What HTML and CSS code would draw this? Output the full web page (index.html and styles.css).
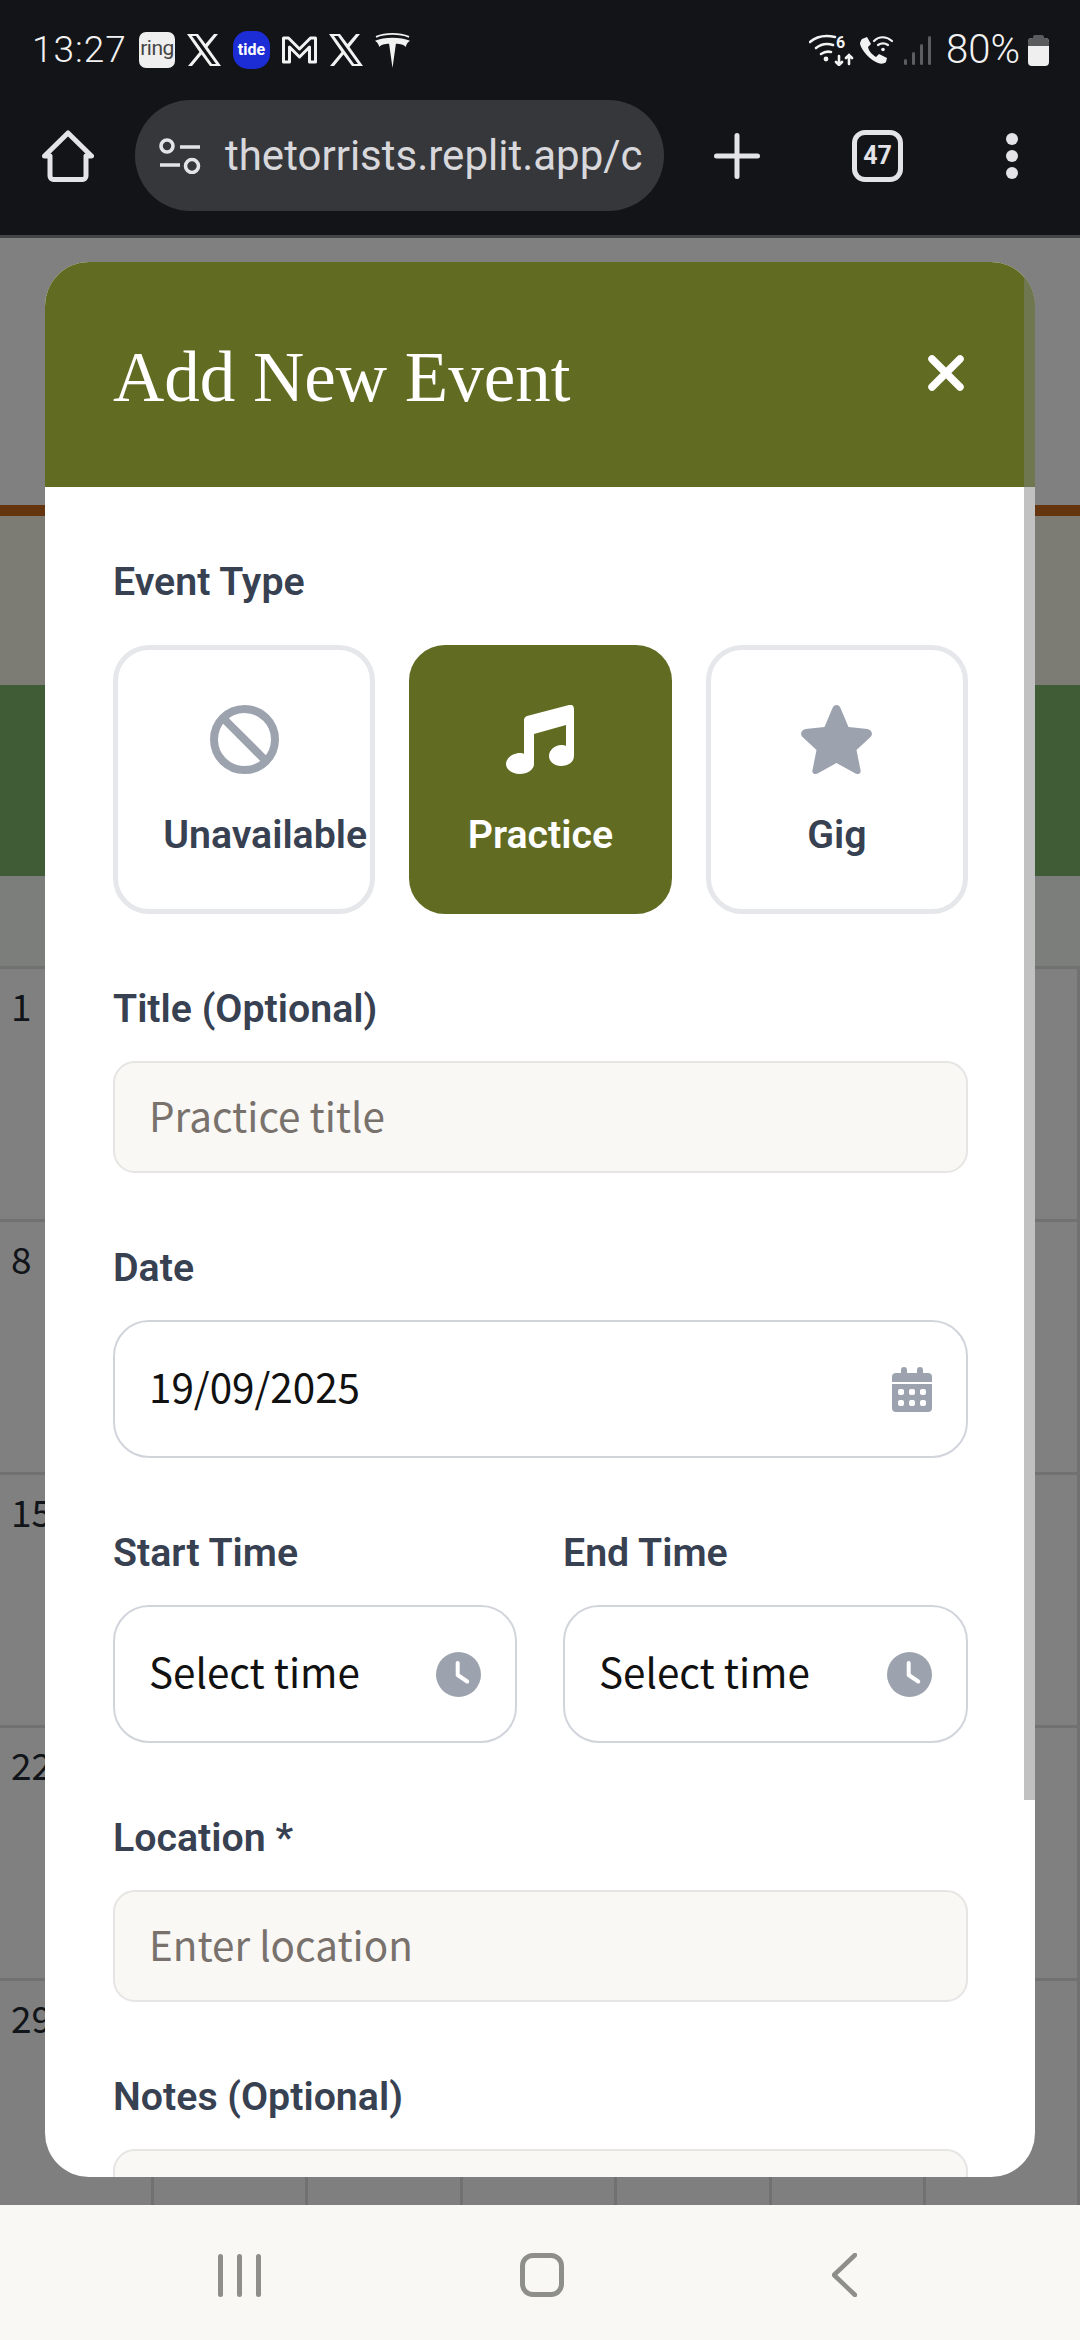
FILE: index.html
```html
<!DOCTYPE html>
<html lang="en">
<head>
  <meta charset="utf-8">
  <title>Add New Event</title>
  <link rel="stylesheet" href="styles.css">
</head>
<body>
  <div class="phone">
    <header class="chrome">
      <div class="status">
        <span class="clock">13:27</span>
        <span class="ring">ring</span>
        <svg width="34" height="32" viewBox="0 0 34 32"><path d="M0 0h11l7.500 10L27 0h4L20.500 13 34 32H23l-8.500-11.500L5 32H1l11.500-14zM5 2l20 28h4L9 2z" fill="#f2f2f2" fill-rule="evenodd"/></svg>
        <span class="tide">tide</span>
        <svg width="35" height="28" viewBox="0 0 35 28"><path d="M1.500 2h5l11 11 11-11h5v24h-6V11l-10 10-10-10v15h-6z" fill="none" stroke="#f2f2f2" stroke-width="3" stroke-linejoin="round"/></svg>
        <svg width="34" height="32" viewBox="0 0 34 32"><path d="M0 0h11l7.500 10L27 0h4L20.500 13 34 32H23l-8.500-11.500L5 32H1l11.500-14zM5 2l20 28h4L9 2z" fill="#f2f2f2" fill-rule="evenodd"/></svg>
        <svg width="35" height="35" viewBox="0 0 36 36"><path d="M1 4C11 0 25 0 35 4" fill="none" stroke="#f2f2f2" stroke-width="1.800"/><path d="M18 36l-3.500-25C10 11 6 12 4.500 14.500 3.500 11.500 2.500 9.500 0 8c5-2 11-3 18-3s13 1 18 3c-2.500 1.500-3.500 3.500-4.500 6.500C30 12 26 11 21.500 11z" fill="#f2f2f2"/></svg>
        <span class="status-right">
          <svg width="45" height="32" viewBox="0 0 45 32"><g fill="none" stroke="#f2f2f2" stroke-width="2.600" stroke-linecap="round"><path d="M1 8C8 2 17 1 26 3"/><path d="M7 14c5-4 11-5 17-3"/><path d="M12 20c3-2 6-3 10-2"/><path d="M30 22v9M27 28l3 3 3-3M40 30v-9M37 24l3-3 3 3"/></g><circle cx="17" cy="25" r="2.400" fill="#f2f2f2"/><text x="27" y="14" class="six">6</text></svg>
          <svg class="st-call" width="33" height="28" viewBox="0 0 33 28"><path d="M2 3l5-2 4 7-3 3c1 5 5 8 8 10l3-3 8 4-1 4c-2 2-5 2-8 1C10 24 2 15 0 8c0-2 1-4 2-5z" fill="#f2f2f2"/><g fill="none" stroke="#f2f2f2" stroke-width="2.200" stroke-linecap="round"><path d="M14 5c5-5 12-5 18 0"/><path d="M18 9c3-2 7-2 10 0"/></g><circle cx="23" cy="13.500" r="1.800" fill="#f2f2f2"/></svg>
          <svg class="st-signal" width="27" height="29" viewBox="0 0 27 29"><g fill="#5c5e60"><rect x="0" y="23" width="3" height="6" rx="1.500"/><rect x="8" y="16" width="3" height="13" rx="1.500"/><rect x="16" y="8" width="3" height="21" rx="1.500"/><rect x="24" y="0" width="3" height="29" rx="1.500"/></g></svg>
          <span class="battery-text">80%</span>
          <span class="battery"><i></i></span>
        </span>
      </div>
      <div class="toolbar">
        <svg class="home-btn" width="52" height="52" viewBox="0 0 52 52"><path d="M2.500 26L26 3l23.500 23H44v20a3.500 3.500 0 0 1-3.500 3.500h-29A3.500 3.500 0 0 1 8 46V26z" fill="none" stroke="#e4e4e8" stroke-width="5" stroke-linejoin="round"/></svg>
        <div class="urlbar">
          <svg width="42" height="36" viewBox="0 0 42 36"><g fill="none" stroke="#e4e4e8" stroke-width="3.600"><circle cx="8" cy="8" r="6"/><circle cx="33" cy="28" r="6.500"/><path d="M21 9h20M1 27h20"/></g></svg>
          <span class="url">thetorrists.replit.app/c</span>
        </div>
        <svg class="plus-btn" width="46" height="46" viewBox="0 0 46 46"><path d="M23 2.500v41M2.500 23h41" stroke="#e4e4e8" stroke-width="5" stroke-linecap="round"/></svg>
        <span class="tabs">47</span>
        <span class="kebab"><i></i><i></i><i></i></span>
      </div>
    </header>

    <main class="backdrop">
      <div class="band-top"></div>
      <div class="brown-line"></div>
      <div class="band-warm"></div>
      <div class="green-band"></div>
      <div class="band-cool"></div>
      <div class="cal">
        <div class="cal-row">1</div>
        <div class="cal-row">8</div>
        <div class="cal-row">15</div>
        <div class="cal-row">22</div>
        <div class="cal-row">29</div>
      </div>
      <div class="cal-cols"><i></i><i></i><i></i><i></i><i></i><i></i><i></i></div>

      <section class="modal">
        <div class="modal-head">
          <h2>Add New Event</h2>
          <svg width="36" height="36" viewBox="0 0 36 36"><path d="M4 4l28 28M32 4L4 32" stroke="#fff" stroke-width="7.500" stroke-linecap="round"/></svg>
        </div>
        <div class="modal-body">
          <form class="form">
            <label class="lbl type-lbl">Event Type</label>
            <div class="types">
              <div class="type">
                <svg width="69" height="69" viewBox="0 0 69 69"><circle cx="34.500" cy="34.500" r="30.500" fill="none" stroke="#9ca3af" stroke-width="8"/><path d="M13 13l43 43" stroke="#9ca3af" stroke-width="8"/></svg>
                <span class="type-name overflow">Unavailable</span>
              </div>
              <div class="type active">
                <svg width="68" height="69" viewBox="0 0 68 69"><path d="M18 15c0-2 1-3 3-4L63 0c3-1 5 1 5 4v47c0 7-7 10-13 10s-12-4-12-10 6-11 12-11c2 0 4 0 5 1V20L28 29v30c0 6-7 10-14 10S0 65 0 59s7-11 14-11c2 0 3 0 4 1z" fill="#fff"/></svg>
                <span class="type-name">Practice</span>
              </div>
              <div class="type">
                <svg width="71" height="69" viewBox="0 0 71 69"><path d="M35.500 0c2 0 3 1 4 3l8 19 19 2c4 1 6 5 3 8L55.500 45l4 20c1 4-3 5-6 3l-18-10-18 10c-3 2-7 1-6-3l4-20L1.500 32c-3-3-1-7 3-8l19-2 8-19c1-2 2-3 4-3z" fill="#9ca3af"/></svg>
                <span class="type-name">Gig</span>
              </div>
            </div>

            <label class="lbl">Title (Optional)</label>
            <div class="field muted">Practice title</div>

            <label class="lbl">Date</label>
            <div class="field picker">
              19/09/2025
              <svg width="40" height="45" viewBox="0 0 40 45"><path d="M9 3a3 3 0 0 1 6 0v3h10V3a3 3 0 0 1 6 0v3h5a4 4 0 0 1 4 4v5H0v-5a4 4 0 0 1 4-4h5zM0 17h40v24a4 4 0 0 1-4 4H4a4 4 0 0 1-4-4z" fill="#9ca3af"/><g fill="#fff"><rect x="6" y="22" width="6" height="6" rx="2"/><rect x="17" y="22" width="6" height="6" rx="2"/><rect x="28" y="22" width="6" height="6" rx="2"/><rect x="6" y="33" width="6" height="6" rx="2"/><rect x="17" y="33" width="6" height="6" rx="2"/><rect x="28" y="33" width="6" height="6" rx="2"/></g></svg>
            </div>

            <div class="times">
              <div>
                <label class="lbl">Start Time</label>
                <div class="field picker">
                  Select time
                  <svg width="45" height="45" viewBox="0 0 45 45"><circle cx="22.500" cy="22.500" r="22.500" fill="#9ca3af"/><path d="M21.700 11v12l9.500 6.500" fill="none" stroke="#fff" stroke-width="4" stroke-linecap="round" stroke-linejoin="round"/></svg>
                </div>
              </div>
              <div>
                <label class="lbl">End Time</label>
                <div class="field picker">
                  Select time
                  <svg width="45" height="45" viewBox="0 0 45 45"><circle cx="22.500" cy="22.500" r="22.500" fill="#9ca3af"/><path d="M21.700 11v12l9.500 6.500" fill="none" stroke="#fff" stroke-width="4" stroke-linecap="round" stroke-linejoin="round"/></svg>
                </div>
              </div>
            </div>

            <label class="lbl">Location *</label>
            <div class="field muted">Enter location</div>

            <label class="lbl">Notes (Optional)</label>
            <div class="field muted notes"></div>
          </form>
          <div class="scroll-thumb"></div>
        </div>
      </section>
    </main>

    <footer class="navbar">
      <span class="nav-lines"><i></i><i></i><i></i></span>
      <span class="nav-home"></span>
      <svg class="nav-back" width="25" height="44" viewBox="0 0 25 44"><path d="M23 2L2 22l21 20" fill="none" stroke="#8e8e8a" stroke-width="4.500" stroke-linecap="round" stroke-linejoin="round"/></svg>
    </footer>
  </div>
</body>
</html>
```

FILE: styles.css
```css
* {
  box-sizing: border-box;
}

html, body {
  margin: 0;
  padding: 0;
}

body {
  font-family: Roboto, "Liberation Sans", sans-serif;
}

.phone {
  width: 1080px;
  height: 2340px;
  display: flex;
  flex-direction: column;
  overflow: hidden;
}

/* browser top */
.chrome {
  height: 238px;
  flex: none;
  background: #121418;
  border-bottom: 3px solid #444546;
  color: #f2f2f2;
}

.status {
  height: 100px;
  padding: 0 31px 0 32px;
  display: flex;
  align-items: center;
  gap: 12px;
}

.clock {
  font-size: 37px;
  font-weight: 300;
  line-height: 38px;
  letter-spacing: 1px;
  width: 95px;
}

.ring {
  width: 36px;
  height: 36px;
  border-radius: 7px;
  background: #efefef;
  color: #444;
  font-size: 21px;
  letter-spacing: -0.5px;
  line-height: 33px;
  text-align: center;
}

.tide {
  width: 37px;
  height: 38px;
  border-radius: 15px;
  background: #1c2dd6;
  color: #fff;
  font-size: 16px;
  font-weight: 700;
  line-height: 38px;
  text-align: center;
}

.status-right {
  margin-left: auto;
  display: flex;
  align-items: center;
}

.six {
  font-size: 16px;
  font-weight: 700;
  fill: #f2f2f2;
}

.st-call {
  margin-left: 6px;
}

.st-signal {
  margin-left: 11px;
}

.battery-text {
  font-size: 40px;
  font-weight: 300;
  line-height: 38px;
  margin-left: 15px;
  width: 82px;
}

.battery {
  width: 21px;
  height: 28px;
  margin-top: 3px;
  border-radius: 4px;
  background: #efefef;
  position: relative;
  display: block;
}

.battery i {
  position: absolute;
  left: 0;
  right: 0;
  top: 0;
  height: 8px;
  border-radius: 4px 4px 0 0;
  background: #5a5b5c;
}

.battery i::before {
  content: "";
  position: absolute;
  left: 5px;
  top: -3px;
  width: 11px;
  height: 4px;
  border-radius: 2px 2px 0 0;
  background: #5a5b5c;
}

.toolbar {
  display: flex;
  align-items: center;
  padding-left: 42px;
  height: 111px;
}

.home-btn, .plus-btn {
  flex: none;
}

.urlbar {
  width: 529px;
  height: 111px;
  margin-left: 41px;
  border-radius: 56px;
  background: #36373b;
  display: flex;
  align-items: center;
  padding-left: 24px;
  flex: none;
  overflow: hidden;
}

.url {
  margin-left: 24px;
  font-size: 42px;
  color: #d8d8dc;
  white-space: nowrap;
}

.plus-btn {
  margin-left: 50px;
}

.tabs {
  width: 51px;
  height: 52px;
  margin-left: 92px;
  border: 5px solid #e4e4e8;
  border-radius: 13px;
  font-size: 25px;
  font-weight: 700;
  line-height: 42px;
  text-align: center;
  color: #e4e4e8;
}

.kebab {
  margin-left: 103px;
  display: flex;
  flex-direction: column;
  gap: 5px;
}

.kebab i {
  display: block;
  width: 12px;
  height: 12px;
  border-radius: 50%;
  background: #e4e4e8;
}

/* dimmed page behind the dialog */
.backdrop {
  flex: 1;
  position: relative;
  background: #808080;
  overflow: hidden;
}

.band-top {
  height: 267px;
}

.brown-line {
  height: 11px;
  background: #65350f;
}

.band-warm {
  height: 169px;
  background: #7c7c74;
}

.green-band {
  height: 191px;
  background: #3f5c36;
}

.band-cool {
  height: 90px;
  background: #7c7e7c;
}

.cal-row {
  height: 253px;
  border-top: 3px solid #717171;
  padding: 12px 0 0 11px;
  font-family: "Noto Sans CJK JP", "Noto Sans", sans-serif;
  font-size: 37px;
  line-height: 48px;
  color: #111418;
}

.cal-row:last-child {
  background: #7e7f7e;
}

.cal-cols {
  position: absolute;
  left: 151px;
  right: 0;
  top: 728px;
  bottom: 0;
  display: flex;
  gap: 151.400px;
}

.cal-cols i {
  width: 3px;
  flex: none;
  background: #717171;
}

/* dialog */
.modal {
  position: absolute;
  left: 45px;
  top: 24px;
  width: 990px;
  height: 1915px;
  border-radius: 44px;
  overflow: hidden;
  background: #fff;
  display: flex;
  flex-direction: column;
}

.modal-head {
  height: 225px;
  flex: none;
  background: #616b21;
  display: flex;
  align-items: center;
  justify-content: space-between;
  padding: 0 71px 0 68px;
  position: relative;
}

.modal-head::after {
  content: "";
  position: absolute;
  top: 0;
  right: 0;
  bottom: 0;
  width: 11px;
  background: #6f7751;
}

.modal-head h2 {
  margin: 6px 0 0;
  font-family: "Liberation Serif", serif;
  font-weight: 400;
  font-size: 71px;
  color: #fff;
}

.modal-head svg {
  margin-bottom: 3px;
}

.modal-body {
  flex: 1;
  position: relative;
  overflow: hidden;
}

.scroll-thumb {
  position: absolute;
  top: 0;
  right: 0;
  width: 11px;
  height: 1313px;
  background: #c1c1c1;
}

.form {
  width: 979px;
  height: 100%;
  padding: 0 56px 0 68px;
  overflow: hidden;
}

.lbl {
  display: block;
  font-size: 39.300px;
  font-weight: 600;
  line-height: 46px;
  color: #374151;
  margin-top: 72px;
  margin-bottom: 29px;
}

.type-lbl {
  margin-bottom: 40px;
}

.types {
  display: grid;
  grid-template-columns: repeat(3, 1fr);
  gap: 34px;
}

.type {
  height: 269px;
  border: 5px solid #e5e7eb;
  border-radius: 36px;
  padding-top: 55px;
  display: flex;
  flex-direction: column;
  align-items: center;
  gap: 38px;
  color: #374151;
}

.type.active {
  background: #616b21;
  border-color: #616b21;
  color: #fff;
}

.type-name {
  font-size: 39.300px;
  font-weight: 600;
  line-height: 46px;
  white-space: nowrap;
}

.type-name.overflow {
  margin-left: 42px;
}

.field {
  height: 112px;
  border-radius: 22px;
  border: 2px solid #e6e5e3;
  background: #f9f8f5;
  font-family: "Noto Sans CJK JP", "Noto Sans", sans-serif;
  font-size: 40.400px;
  padding: 0 34px 0 34px;
  display: flex;
  align-items: center;
  color: #111;
}

.field.muted {
  color: #78716c;
  padding-bottom: 5px;
}

.field.picker {
  height: 138px;
  background: #fff;
  border: 2px solid #d1d5db;
  border-radius: 36px;
  justify-content: space-between;
  line-height: 1;
  padding-bottom: 6px;
}

.field.picker svg {
  margin-top: 6px;
}

.times {
  display: grid;
  grid-template-columns: 404px 405px;
  gap: 46px;
}

.field.notes {
  height: 120px;
}

/* system nav */
.navbar {
  height: 135px;
  flex: none;
  background: #f9f8f4;
  display: flex;
  align-items: center;
  padding: 5px 0 0 218px;
}

.nav-lines {
  display: flex;
  gap: 14px;
  width: 44px;
}

.nav-lines i {
  display: block;
  width: 5px;
  height: 43px;
  flex: none;
  border-radius: 3px;
  background: #8e8e8a;
}

.nav-home {
  width: 44px;
  height: 44px;
  margin-left: 258px;
  border: 5px solid #8e8e8a;
  border-radius: 13px;
}

.nav-back {
  margin-left: 268px;
}
```
